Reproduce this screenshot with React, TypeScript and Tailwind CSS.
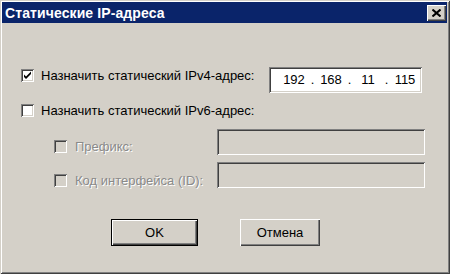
import React from 'react';

const font = "font-['Liberation_Sans',Arial,sans-serif]";

// sunken 3D border, classic windows style
const sunken =
  'shadow-[inset_1px_1px_0_#808080,inset_-1px_-1px_0_#ffffff,inset_2px_2px_0_#404040,inset_-2px_-2px_0_#d4d0c8]';
const raised =
  'shadow-[inset_1px_1px_0_#ffffff,inset_-1px_-1px_0_#404040,inset_-2px_-2px_0_#808080]';

const CheckBox: React.FC<{ checked?: boolean; disabled?: boolean }> = ({ checked, disabled }) => (
  <div
    className={`w-[13px] h-[13px] shrink-0 flex items-center justify-center ${sunken} ${
      disabled ? 'bg-[#d4d0c8]' : 'bg-white'
    }`}
  >
    {checked && (
      <svg width="9" height="9" viewBox="0 0 9 9">
        <path d="M1 3.5 L3 5.5 L8 0.5 L8 3 L3 8 L1 6 Z" fill="#000" />
      </svg>
    )}
  </div>
);

const Label: React.FC<{ text: string; disabled?: boolean }> = ({ text, disabled }) => (
  <span
    className={`text-[13px] leading-none whitespace-nowrap ${
      disabled ? 'text-[#8a8a8a] [text-shadow:1px_1px_0_#ffffff]' : 'text-black'
    }`}
  >
    {text}
  </span>
);

const ipParts = ['192', '168', '11', '115'];

const App: React.FC = () => {
  return (
    <div className={`w-[450px] h-[274px] bg-[#d4d0c8] ${font} flex flex-col p-[2px] overflow-hidden shadow-[inset_1px_1px_0_#d4d0c8,inset_-1px_-1px_0_#404040,inset_2px_2px_0_#ffffff,inset_-2px_-2px_0_#808080]`}>
      {/* title bar */}
      <div className="h-[21px] bg-[#0a246a] flex items-center justify-between pl-[3px] pr-[1px] mr-[1px]">
        <span className="text-white font-bold text-[14px] leading-none tracking-[0.1px]">Статические IP-адреса</span>
        <div className={`w-[19px] h-[16px] bg-[#d4d0c8] flex items-center justify-center ${raised}`}>
          <svg width="9" height="8" viewBox="0 0 9 8">
            <path d="M0.5 0.5 L8.5 7.5 M8.5 0.5 L0.5 7.5" stroke="#000" strokeWidth="2" />
          </svg>
        </div>
      </div>

      <div className="flex flex-col pl-[19px] pr-[23px]">
        {/* IPv4 row */}
        <div className="flex items-start justify-between mt-[44px] pr-[3px]">
          <div className="flex items-center gap-[7px] mt-[2px]">
            <CheckBox checked />
            <Label text="Назначить статический IPv4-адрес:" />
          </div>
          <div className={`w-[153px] h-[26px] bg-white ${sunken} flex items-center pl-[13px] text-[13px] text-black`}>
            {ipParts.map((p, i) => (
              <React.Fragment key={i}>
                <span className="w-[24px] text-center">{p}</span>
                {i < 3 && <span className="w-[13px] text-center">.</span>}
              </React.Fragment>
            ))}
          </div>
        </div>

        {/* IPv6 row */}
        <div className="flex items-center gap-[7px] mt-[11px]">
          <CheckBox />
          <Label text="Назначить статический IPv6-адрес:" />
        </div>

        {/* prefix */}
        <div className="flex items-start justify-between mt-[12px] pl-[33px]">
          <div className="flex items-center gap-[8px] mt-[11px]">
            <CheckBox disabled />
            <Label text="Префикс:" disabled />
          </div>
          <div className={`w-[208px] h-[26px] ${sunken}`} />
        </div>

        {/* interface id */}
        <div className="flex items-start justify-between mt-[7px] pl-[33px]">
          <div className="flex items-center gap-[8px] mt-[12px]">
            <CheckBox disabled />
            <Label text="Код интерфейса (ID):" disabled />
          </div>
          <div className={`w-[208px] h-[26px] ${sunken}`} />
        </div>

        {/* buttons */}
        <div className="flex items-center gap-[42px] mt-[31px] pl-[90px]">
          <div className="w-[87px] h-[27px] border border-black bg-[#d4d0c8] flex items-center justify-center shadow-[inset_1px_1px_0_#ffffff,inset_-1px_-1px_0_#404040,inset_-2px_-2px_0_#808080]">
            <span className="text-[13px] text-black leading-none">OK</span>
          </div>
          <div className={`w-[80px] h-[27px] bg-[#d4d0c8] flex items-center justify-center ${raised}`}>
            <span className="text-[13px] text-black leading-none">Отмена</span>
          </div>
        </div>
      </div>
    </div>
  );
};

export default App;
